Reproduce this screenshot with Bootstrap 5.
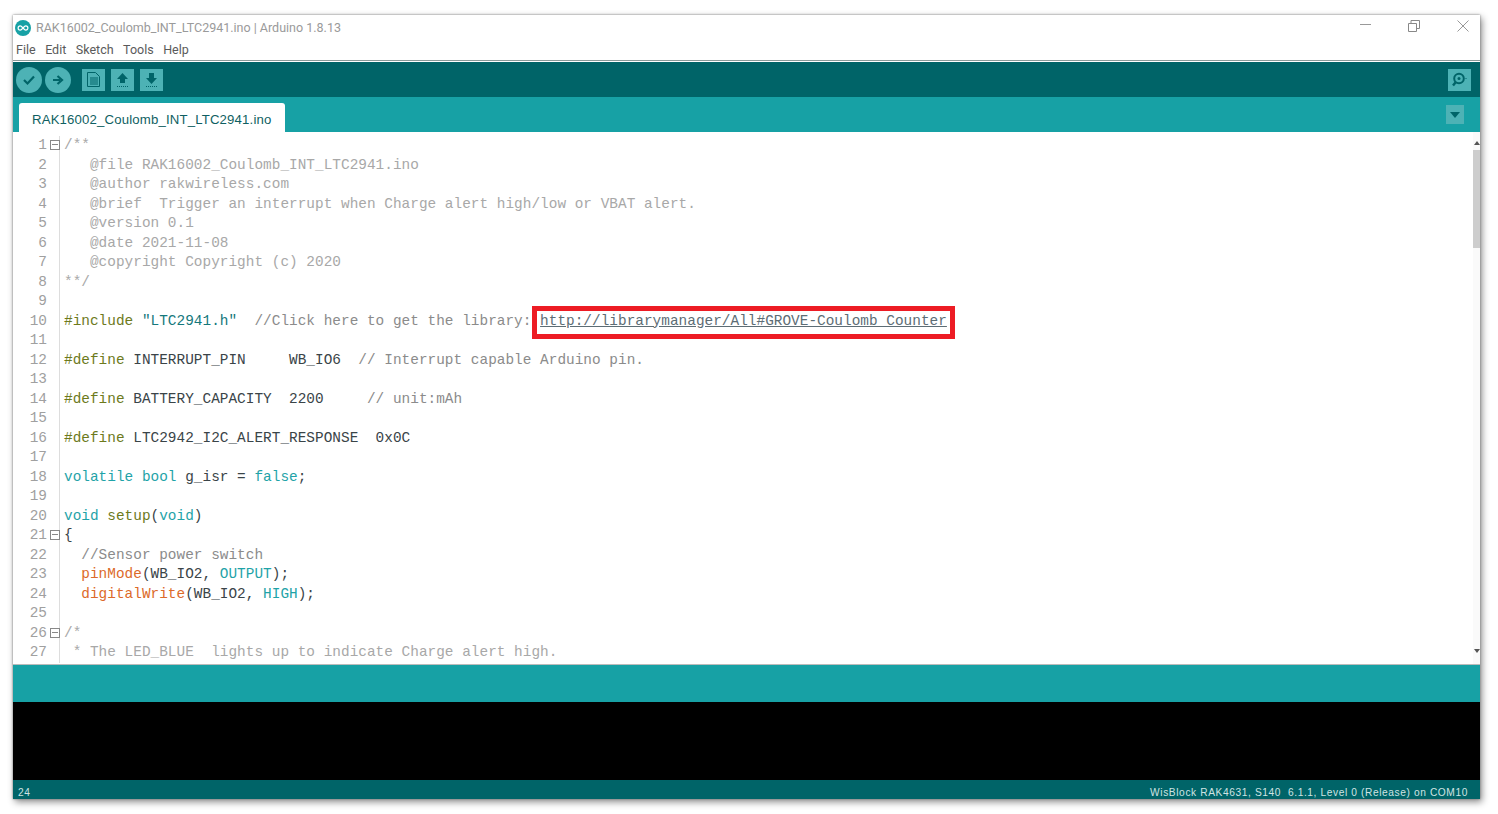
<!DOCTYPE html>
<html lang="en">
<head>
<meta charset="utf-8">
<title>RAK16002_Coulomb_INT_LTC2941.ino | Arduino 1.8.13</title>
<link href="https://cdn.jsdelivr.net/npm/bootstrap@5.3.0/dist/css/bootstrap.min.css" rel="stylesheet">
<style>
html,body{height:100%;background:#fff;overflow:hidden}
.ide-window{margin:15px 18px 0 13px;height:784px;box-shadow:0 0 2px #777,2px 3px 7px rgba(0,0,0,.45);font-family:Roboto,sans-serif}
.title-row{height:26px;padding-left:2px;color:#9a9a9a;font-size:12.5px}
.ide-logo{width:16px;height:16px;margin-right:5px}
.win-btns{gap:37px;padding:0 11px 5px 0}
.menu-row{height:20px;padding:0 0 1px 3px;gap:9.5px;font-size:12.5px;color:#5a5a5a;border-bottom:1px solid #8a9a9a}
.tool-row{height:36px;background:#006468;border-top:1px solid #fff;padding:0 9px 0 3px}
.round-btn{width:26px;height:26px;border-radius:50%;background:#4db2b5;margin-right:3px}
.square-btn{width:23px;height:22px;background:#4db2b5;margin-right:6px}
.gap-left{margin-left:8px}
.tab-row{height:35px;background:#17a1a5;padding:6px 16px 0 6px}
.file-tab{height:29px;width:266px;background:#fff;border-radius:3px 3px 0 0;padding:4px 0 0 13px;color:#0f5f62;font-family:"Liberation Sans",sans-serif;font-size:13.2px;letter-spacing:.16px}
.tab-menu{width:18px;height:19px;background:#4db2b5;margin-top:2px}
.editor{height:533px;background:#fff;overflow:hidden;border-bottom:1px solid #bbb}
.code-area{padding-top:4px;font-family:"Liberation Mono",monospace;font-size:14.4px;letter-spacing:.02px;line-height:19.5px;color:#3a4448}
.code-line{height:19.5px;white-space:pre}
.ln{width:34px;flex:none;text-align:right;color:#a0a0a0}
.gut{width:13px;flex:none;border-right:1px solid #ddd;margin-right:4px;height:19.5px}
.fold{display:block;width:10px;height:10px;border:1px solid #888;position:relative;margin:4px 0 0 3px}
.fold::after{content:"";position:absolute;left:1px;right:1px;top:3px;height:1px;background:#888}
.c1{color:#a8a8a8}.c2{color:#8b8b8b}.kw{color:#6d7a1c}.ty{color:#1fa3a8}.fn{color:#dc6a2a}.st{color:#15787c}
.lib-link{color:#5d6d75;text-decoration:underline;position:relative}
.lib-link::after{content:"";position:absolute;left:-8px;right:-8px;top:-7px;bottom:-10px;border:5px solid #ed1c24}
.v-scroll{width:7px;flex:none;background:#fafafa;position:relative}
.v-thumb{position:absolute;left:0;right:0;top:18px;height:98px;background:#cdcdcd}
.arrow-t,.arrow-b{position:absolute;right:0;width:0;height:0;border-left:3px solid transparent;border-right:3px solid transparent}
.arrow-t{top:9px;border-bottom:4px solid #555}
.arrow-b{bottom:11px;border-top:4px solid #555}
.status-row{height:37px;background:#17a1a5}
.console-box{height:78px;background:#000}
.foot-row{height:19px;background:#006468;color:#cfe3e3;font-family:"Liberation Sans",sans-serif;font-size:10.2px;letter-spacing:.6px;padding:6px 12px 0 5px;white-space:pre}
</style>
</head>
<body class="m-0">
<div class="ide-window d-flex flex-column">
  <div class="title-row d-flex align-items-center justify-content-between">
    <div class="d-flex align-items-center">
      <svg class="ide-logo" viewBox="0 0 16 16"><circle cx="8" cy="8" r="8" fill="#17a1a5"/><path d="M5.2 5.9a2.1 2.1 0 1 0 0 4.2c2 0 3.6-4.2 5.6-4.2a2.1 2.1 0 1 1 0 4.2c-2 0-3.6-4.2-5.6-4.2z" fill="none" stroke="#fff" stroke-width="1.2"/></svg>
      <span>RAK16002_Coulomb_INT_LTC2941.ino | Arduino 1.8.13</span>
    </div>
    <div class="win-btns d-flex align-items-center">
      <svg width="11" height="12" viewBox="0 0 11 12"><path d="M0 4.5h11" stroke="#999" fill="none"/></svg>
      <svg width="12" height="12" viewBox="0 0 12 12"><path d="M.5 3.5h8v8h-8zM3 3.5V.5h8.500v8H8.500" stroke="#888" fill="none"/></svg>
      <svg width="12" height="12" viewBox="0 0 12 12"><path d="M.5.5l11 11M11.500.5l-11 11" stroke="#999" fill="none"/></svg>
    </div>
  </div>
  <div class="menu-row d-flex align-items-center"><span>File</span><span>Edit</span><span>Sketch</span><span>Tools</span><span>Help</span></div>
  <div class="tool-row d-flex align-items-center">
    <div class="round-btn d-flex align-items-center justify-content-center"><svg width="14" height="12" viewBox="0 0 14 12"><path d="M2 6l3.500 3.500L12 2.500" stroke="#006468" stroke-width="2.200" fill="none"/></svg></div>
    <div class="round-btn d-flex align-items-center justify-content-center"><svg width="12" height="12" viewBox="0 0 12 12"><path d="M1 6h7M5.500 2l4.500 4-4.500 4" stroke="#006468" stroke-width="2.200" fill="none"/></svg></div>
    <div class="square-btn gap-left d-flex align-items-center justify-content-center"><svg width="13" height="15" viewBox="0 0 13 15"><path d="M.5.5h8l4 4v10H.5z" fill="none" stroke="#006468"/><path d="M3 6h8M3 8h8M3 10h8M3 12h8" stroke="#006468"/></svg></div>
    <div class="square-btn d-flex align-items-center justify-content-center"><svg width="13" height="16" viewBox="0 0 13 16"><path d="M6.500 1l5.500 6H9v4H4V7H1z" fill="#006468"/><path d="M1 14.500h11" stroke="#006468" stroke-dasharray="1 1"/></svg></div>
    <div class="square-btn d-flex align-items-center justify-content-center"><svg width="13" height="16" viewBox="0 0 13 16"><path d="M4 1h5v5h3l-5.500 6L1 6h3z" fill="#006468"/><path d="M1 14.500h11" stroke="#006468" stroke-dasharray="1 1"/></svg></div>
    <div class="square-btn ms-auto me-0 d-flex align-items-center justify-content-center"><svg width="17" height="15" viewBox="0 0 17 15"><circle cx="8" cy="6.500" r="4.800" fill="none" stroke="#006468" stroke-width="2"/><circle cx="8" cy="6.500" r="1.500" fill="#006468"/><path d="M4.500 10.500L2 13.500" stroke="#006468" stroke-width="2.500"/><path d="M14.500 6.500h2" stroke="#006468" stroke-dasharray="1 1"/></svg></div>
  </div>
  <div class="tab-row d-flex justify-content-between">
    <div class="file-tab d-flex align-items-center">RAK16002_Coulomb_INT_LTC2941.ino</div>
    <div class="tab-menu d-flex align-items-center justify-content-center"><svg width="10" height="6" viewBox="0 0 10 6"><path d="M0 0h10L5 6z" fill="#006468"/></svg></div>
  </div>
  <div class="editor d-flex">
    <div class="code-area flex-grow-1">
      <div class="code-line d-flex"><span class="ln">1</span><span class="gut"><i class="fold"></i></span><span class="c1">/**</span></div>
      <div class="code-line d-flex"><span class="ln">2</span><span class="gut"></span><span class="c1">   @file RAK16002_Coulomb_INT_LTC2941.ino</span></div>
      <div class="code-line d-flex"><span class="ln">3</span><span class="gut"></span><span class="c1">   @author rakwireless.com</span></div>
      <div class="code-line d-flex"><span class="ln">4</span><span class="gut"></span><span class="c1">   @brief  Trigger an interrupt when Charge alert high/low or VBAT alert.</span></div>
      <div class="code-line d-flex"><span class="ln">5</span><span class="gut"></span><span class="c1">   @version 0.1</span></div>
      <div class="code-line d-flex"><span class="ln">6</span><span class="gut"></span><span class="c1">   @date 2021-11-08</span></div>
      <div class="code-line d-flex"><span class="ln">7</span><span class="gut"></span><span class="c1">   @copyright Copyright (c) 2020</span></div>
      <div class="code-line d-flex"><span class="ln">8</span><span class="gut"></span><span class="c1">**/</span></div>
      <div class="code-line d-flex"><span class="ln">9</span><span class="gut"></span></div>
      <div class="code-line d-flex"><span class="ln">10</span><span class="gut"></span><span><span class="kw">#include</span> <span class="st">"LTC2941.h"</span>  <span class="c2">//Click here to get the library: </span><span class="lib-link">http://librarymanager/All#GROVE-Coulomb_Counter</span></span></div>
      <div class="code-line d-flex"><span class="ln">11</span><span class="gut"></span></div>
      <div class="code-line d-flex"><span class="ln">12</span><span class="gut"></span><span><span class="kw">#define</span> INTERRUPT_PIN     WB_IO6  <span class="c2">// Interrupt capable Arduino pin.</span></span></div>
      <div class="code-line d-flex"><span class="ln">13</span><span class="gut"></span></div>
      <div class="code-line d-flex"><span class="ln">14</span><span class="gut"></span><span><span class="kw">#define</span> BATTERY_CAPACITY  2200     <span class="c2">// unit:mAh</span></span></div>
      <div class="code-line d-flex"><span class="ln">15</span><span class="gut"></span></div>
      <div class="code-line d-flex"><span class="ln">16</span><span class="gut"></span><span><span class="kw">#define</span> LTC2942_I2C_ALERT_RESPONSE  0x0C</span></div>
      <div class="code-line d-flex"><span class="ln">17</span><span class="gut"></span></div>
      <div class="code-line d-flex"><span class="ln">18</span><span class="gut"></span><span><span class="ty">volatile</span> <span class="ty">bool</span> g_isr = <span class="ty">false</span>;</span></div>
      <div class="code-line d-flex"><span class="ln">19</span><span class="gut"></span></div>
      <div class="code-line d-flex"><span class="ln">20</span><span class="gut"></span><span><span class="ty">void</span> <span class="kw">setup</span>(<span class="ty">void</span>)</span></div>
      <div class="code-line d-flex"><span class="ln">21</span><span class="gut"><i class="fold"></i></span><span>{</span></div>
      <div class="code-line d-flex"><span class="ln">22</span><span class="gut"></span><span class="c2">  //Sensor power switch</span></div>
      <div class="code-line d-flex"><span class="ln">23</span><span class="gut"></span><span>  <span class="fn">pinMode</span>(WB_IO2, <span class="ty">OUTPUT</span>);</span></div>
      <div class="code-line d-flex"><span class="ln">24</span><span class="gut"></span><span>  <span class="fn">digitalWrite</span>(WB_IO2, <span class="ty">HIGH</span>);</span></div>
      <div class="code-line d-flex"><span class="ln">25</span><span class="gut"></span></div>
      <div class="code-line d-flex"><span class="ln">26</span><span class="gut"><i class="fold"></i></span><span class="c1">/*</span></div>
      <div class="code-line d-flex"><span class="ln">27</span><span class="gut"></span><span class="c1"> * The LED_BLUE  lights up to indicate Charge alert high.</span></div>
    </div>
    <div class="v-scroll"><i class="arrow-t"></i><i class="v-thumb"></i><i class="arrow-b"></i></div>
  </div>
  <div class="status-row"></div>
  <div class="console-box"></div>
  <div class="foot-row d-flex align-items-center justify-content-between"><span>24</span><span>WisBlock RAK4631, S140  6.1.1, Level 0 (Release) on COM10</span></div>
</div>
<script src="https://cdn.jsdelivr.net/npm/bootstrap@5.3.0/dist/js/bootstrap.bundle.min.js"></script>
</body>
</html>
